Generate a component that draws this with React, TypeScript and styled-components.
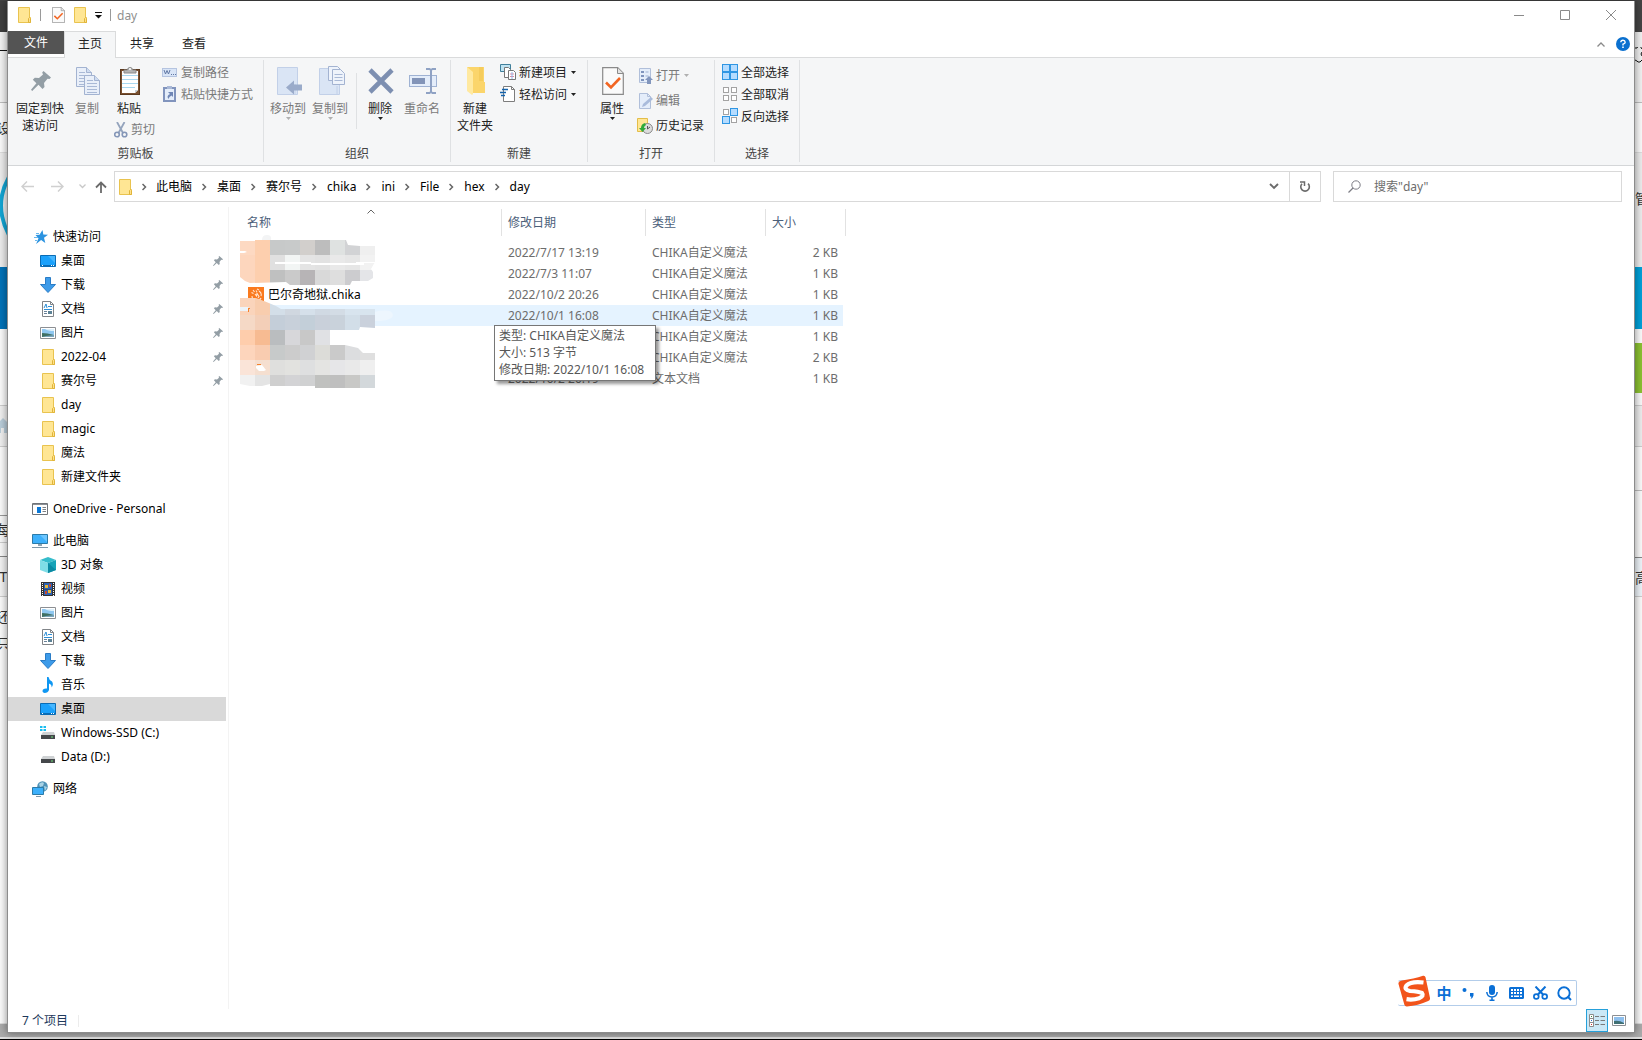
import React from "react";
import styled, { createGlobalStyle } from "styled-components";

const GlobalStyle = createGlobalStyle`
  *, *::before, *::after { box-sizing: border-box; }
  body {
    margin: 0;
    background: #f4f4f4;
    color: #000;
    font: 12px/17px "Noto Sans", "Noto Sans CJK SC", sans-serif;
  }
  button, input { font: inherit; color: inherit; }
  button { border: 0; padding: 0; background: none; white-space: nowrap; }
  a { color: inherit; text-decoration: none; }
  ul, ol { margin: 0; padding: 0; list-style: none; }
  svg { display: block; flex: none; }
`;

/* ---------- desktop behind the window ---------- */

const Desktop = styled.div`
  display: grid;
  grid-template-columns: 7px minmax(0, 1fr) 7px;
  grid-template-rows: minmax(0, 1fr) 7px;
  min-height: 100vh;
  padding-top: 1px;
  background: #444;
`;

const Edge = styled.div`
  display: flex;
  flex-direction: column;
  overflow: hidden;
  height: calc(100vh - 8px);
`;

const Band = styled.div<{ $h?: number; $bg: string; $line?: string; $side?: "left" | "right" }>`
  display: flex;
  flex: ${(p) => (p.$h ? `0 0 ${p.$h}px` : "1")};
  align-items: center;
  justify-content: ${(p) => (p.$side === "right" ? "flex-start" : "center")};
  overflow: hidden;
  background: ${(p) => p.$bg};
  border-bottom: 1px solid ${(p) => p.$line ?? p.$bg};
  color: #333;
  font-size: 14px;
`;

const BottomEdge = styled.div`
  grid-column: 1 / -1;
  background: #ababab;
  border-bottom: 1px solid #000;
  box-shadow: inset 0 -2px #dedede;
`;

/* ---------- window ---------- */

const Window = styled.main`
  position: relative;
  display: flex;
  flex-direction: column;
  min-width: 0;
  background: #fff;
  border: solid #8c8c8c;
  border-width: 0 1px 1px;
  box-shadow: 0 0 8px rgba(0, 0, 0, 0.45);
`;

const TitleBar = styled.header`
  display: flex;
  align-items: center;
  height: 30px;
  padding: 0 0 2px 5px;
  color: #8f8f8f;
`;

const QuickButton = styled.button`
  display: grid;
  place-items: center;
  width: 22px;
  height: 24px;
`;

const Bar = styled.span`
  width: 1px;
  height: 12px;
  margin: 0 6px 0 5px;
  background: #9a9a9a;
`;

const MenuArrow = styled.button`
  display: grid;
  place-items: center;
  width: 14px;
  height: 24px;
`;

const Title = styled.h1`
  margin: 0;
  font: inherit;
`;

const WindowControls = styled.div`
  display: flex;
  margin-left: auto;
`;

const ControlButton = styled.button`
  display: grid;
  place-items: center;
  width: 46px;
  height: 28px;
`;

const Tabs = styled.nav`
  display: flex;
  height: 27px;
  border-bottom: 1px solid #dadbdc;
`;

const Tab = styled.button<{ $kind?: "file" | "active" }>`
  width: 52px;
  height: ${(p) => (p.$kind === "file" ? "23px" : "27px")};
  padding-bottom: ${(p) => (p.$kind === "file" ? "0" : "3px")};
  border: ${(p) => (p.$kind === "active" ? "1px solid #dadbdc" : "0")};
  border-bottom: 0;
  color: ${(p) => (p.$kind === "file" ? "#fff" : "#222")};
  background: ${(p) =>
    p.$kind === "file" ? "#545454" : p.$kind === "active" ? "#f5f6f7" : "transparent"};
  &:first-child { width: 56px; }
`;

const TabTools = styled.div`
  display: flex;
  align-items: center;
  gap: 11px;
  margin-left: auto;
  padding-right: 4px;
`;

/* ---------- ribbon ---------- */

const Ribbon = styled.section`
  display: flex;
  height: 108px;
  padding: 2px 0 3px;
  background: #f5f6f7;
  border-bottom: 1px solid #d4d6d8;
`;

const Group = styled.section`
  display: flex;
  flex-direction: column;
  border-right: 1px solid #dfe1e3;
`;

const GroupBody = styled.div<{ $left?: number; $right?: number }>`
  display: flex;
  flex: 1;
  padding: 0 ${(p) => p.$right ?? 0}px 0 ${(p) => p.$left ?? 3}px;
`;

const GroupLabel = styled.h2`
  margin: 0;
  height: 17px;
  font: inherit;
  color: #444;
  text-align: center;
`;

const BigButton = styled.button<{ $wide?: boolean }>`
  display: flex;
  flex-direction: column;
  align-items: center;
  align-self: flex-start;
  width: ${(p) => (p.$wide ? 52 : 42)}px;
  padding-top: 5px;
  color: #222;
  line-height: 17px;
  &:disabled { color: #7a7a7a; }
`;

const BigIcon = styled.span`
  display: grid;
  place-items: center;
  height: 32px;
  margin-bottom: 3px;
  padding-left: 2px;
`;

const Stack = styled.div`
  display: flex;
  flex-direction: column;
  width: 50px;
`;

const SmallColumn = styled.div<{ $row?: number }>`
  display: flex;
  flex-direction: column;
  padding: ${(p) => (p.$row ? 3 : 1)}px 10px 0 4px;
  & > button { height: ${(p) => p.$row ?? 22}px; }
`;

const SmallButton = styled.button`
  display: flex;
  align-items: center;
  gap: 3px;
  color: #222;
  &:disabled { color: #7a7a7a; }
`;

const CutButton = styled(SmallButton)`
  margin-top: 4px;
  padding-left: 6px;
`;

const Divider = styled.span`
  width: 1px;
  height: 56px;
  margin: 13px 2px 0 5px;
  background: #dfe1e3;
`;

/* ---------- address row ---------- */

const AddressRow = styled.div`
  display: flex;
  height: 36px;
  padding: 5px 12px 0 8px;
`;

const NavButton = styled.button<{ $w: number }>`
  display: grid;
  place-items: center;
  width: ${(p) => p.$w}px;
`;

const AddressBox = styled.div`
  display: flex;
  flex: 1;
  border: 1px solid #d9d9d9;
`;

const Crumbs = styled.ol`
  display: flex;
  flex: 1;
  align-items: center;
  padding-left: 2px;
  li { display: flex; align-items: center; }
`;

const CrumbArrow = styled.span<{ $first: boolean }>`
  display: grid;
  place-items: center;
  width: ${(p) => (p.$first ? 23 : 25)}px;
`;

const BoxButton = styled.button<{ $line?: boolean }>`
  display: grid;
  place-items: center;
  width: ${(p) => (p.$line ? 31 : 30)}px;
  border-left: ${(p) => (p.$line ? "1px solid #d9d9d9" : "0")};
`;

const SearchBox = styled.label`
  display: flex;
  align-items: center;
  gap: 13px;
  width: 289px;
  margin-left: 12px;
  padding-left: 14px;
  border: 1px solid #d9d9d9;
  input {
    flex: 1;
    min-width: 0;
    padding: 0;
    border: 0;
    outline: 0;
    background: none;
  }
  input::placeholder { color: #6d6d6d; opacity: 1; }
`;

/* ---------- body ---------- */

const Body = styled.div`
  display: flex;
  flex: 1;
  min-height: 0;
`;

const Sidebar = styled.nav`
  width: 221px;
  margin-top: 5px;
  padding: 18px 2px 0 0;
  border-right: 1px solid #f3f3f3;
`;

const TreeGroup = styled.ul`
  margin-bottom: 8px;
`;

const TreeLink = styled.a<{ $nested?: boolean; $selected?: boolean }>`
  display: flex;
  align-items: center;
  gap: 5px;
  height: 24px;
  padding: 0 3px 1px ${(p) => (p.$nested ? 32 : 24)}px;
  background: ${(p) => (p.$selected ? "#d9d9d9" : "transparent")};
`;

const PinMark = styled.span`
  margin-left: auto;
`;

const Pane = styled.section`
  position: relative;
  flex: 1;
  min-width: 0;
  padding: 5px 0 0 8px;
`;

const Files = styled.table`
  width: 609px;
  table-layout: fixed;
  border-collapse: separate;
  border-spacing: 0;
  color: #6d6d6d;
  th { padding: 2px 0 6px; font-weight: 400; }
  td { height: 21px; padding: 0 0 0 6px; white-space: nowrap; }
  td:first-child {
    padding-left: 3px;
    border-left: 8px solid transparent;
    background-clip: padding-box;
  }
  td:last-child {
    padding-right: 5px;
    border-right: 3px solid transparent;
    background-clip: padding-box;
    text-align: right;
  }
`;

const Row = styled.tr<{ $hover: boolean }>`
  td { background-color: ${(p) => (p.$hover ? "#e5f3ff" : "transparent")}; }
`;

const HeadButton = styled.button<{ $first?: boolean }>`
  display: block;
  position: relative;
  width: 100%;
  height: 27px;
  padding-left: ${(p) => (p.$first ? 10 : 6)}px;
  border-right: 1px solid #e2e2e2;
  color: #4c607a;
  text-align: left;
`;

const SortMark = styled.span`
  position: absolute;
  top: 0;
  right: 50%;
  margin-right: -6px;
`;

const FileName = styled.span`
  display: flex;
  align-items: center;
  gap: 4px;
  color: #000;
`;

const Smudge = styled.svg`
  position: absolute;
  top: 30px;
  left: 3px;
  pointer-events: none;
`;

const Tooltip = styled.div`
  position: absolute;
  top: 123px;
  left: 265px;
  min-width: 162px;
  padding: 1px 5px 2px 4px;
  border: 1px solid #767676;
  background: #fff;
  box-shadow: 3px 3px 3px rgba(0, 0, 0, 0.4);
  color: #575757;
  white-space: nowrap;
`;

const StatusBar = styled.footer`
  display: flex;
  align-items: center;
  height: 23px;
  padding: 0 4px 0 14px;
  color: #1e395b;
`;

const StatusLine = styled.span`
  width: 1px;
  height: 12px;
  margin-left: 10px;
  background: #ececec;
`;

const ViewSwitch = styled.div`
  display: flex;
  margin-left: auto;
`;

const ViewButton = styled.button<{ $on?: boolean }>`
  display: grid;
  place-items: center;
  width: 22px;
  height: 23px;
  border: 1px solid ${(p) => (p.$on ? "#26a0da" : "transparent")};
  background: ${(p) => (p.$on ? "#cbe8f6" : "transparent")};
`;

/* ---------- input-method bar, floats above everything ---------- */

const ImeBar = styled.aside`
  position: absolute;
  right: 57px;
  bottom: 26px;
  display: flex;
  align-items: center;
  height: 26px;
  padding-left: 34px;
  border: 1px solid #b3cdea;
  border-left: 0;
  border-radius: 2px;
  background: #fff;
`;

const ImeLogo = styled.span`
  position: absolute;
  left: 0;
  bottom: -2px;
`;

const ImeButton = styled.button`
  display: grid;
  place-items: center;
  width: 24px;
  height: 24px;
  color: #0a6fd6;
  font-size: 15px;
  font-weight: 700;
`;

/* ---------- drawings ---------- */

const Folder = () => (
  <svg width="16" height="16" viewBox="0 0 16 16">
    <path d="M2.500.500h11v10h1v5h-12z" fill="#ffe694" stroke="#e9c34f" />
    <path d="M12.500 15.500v-4l1-1 1 1v4z" fill="#ffe08a" stroke="#e0b53a" />
  </svg>
);

const CheckPage = ({ w, h }: { w: number; h: number }) => (
  <svg width={w} height={h} viewBox="0 0 22 28" preserveAspectRatio="none">
    <path d="M.7.7h15l5.600 5.600v21H.7z" fill="#fafafa" stroke="#8a8a8a" strokeWidth="1.200" />
    <path d="M15.500.7v5.800h5.800" fill="#e3e3e3" stroke="#8a8a8a" />
    <path d="M4 15.500l5 5L18 11" fill="none" stroke="#f26522" strokeWidth="2.600" />
  </svg>
);

const Pin = ({ size }: { size: number }) => (
  <svg width={size} height={size} viewBox="0 0 20 20">
    <path
      d="M12.500 0l7.500 6.500-1.500 1.500-2-.3-3.500 4.300.5 4-2 2-4-4.200L1.200 20 0 18.800l5.400-6.500L1.800 8.700l2-2 4.200.4 4-3.700-.8-2z"
      fill="#939ea5"
    />
  </svg>
);

const Sheet = ({ x, y }: { x: number; y: number }) => (
  <g transform={`translate(${x} ${y})`}>
    <path d="M.5.5h10l5 5v14H.5z" fill="#e9eff9" stroke="#a3b3d1" />
    <path d="M10.500.5v5h5" fill="#cfdcf0" stroke="#a3b3d1" />
    <path d="M3 5.500h6M3 8.500h10M3 11.500h10M3 14.500h10M3 17.500h10" stroke="#a9b9d6" />
  </g>
);

const CopyIcon = () => (
  <svg width="25" height="28" viewBox="0 0 25 28">
    <Sheet x={0} y={0} />
    <Sheet x={8} y={8} />
  </svg>
);

const PasteIcon = () => (
  <svg width="22" height="30" viewBox="0 0 22 30">
    <rect x="1.500" y="3.500" width="19" height="25" fill="#7a5030" stroke="#5c3a20" />
    <path d="M3 5h16v19l-3 3H3z" fill="#fff" />
    <path d="M16 27v-3h3z" fill="#c9d3d9" />
    <path d="M3 9.500h16M3 13.500h16M3 17.500h16M3 21.500h13" stroke="#a9d8f0" />
    <path d="M5 7V4h3.500a2.500 2.500 0 015 0H17v3z" fill="#b5b5b5" stroke="#8a8a8a" />
    <circle cx="11" cy="3" r="1" fill="#fff" />
  </svg>
);

const ScissorsIcon = () => (
  <svg width="14" height="16" viewBox="0 0 14 16">
    <path d="M3 0l6 11M10.500 0l-6 11" stroke="#94a4bd" strokeWidth="1.800" />
    <circle cx="3" cy="12.500" r="2.300" fill="none" stroke="#8496b8" strokeWidth="1.600" />
    <circle cx="10.500" cy="12.500" r="2.300" fill="none" stroke="#8496b8" strokeWidth="1.600" />
  </svg>
);

const CopyPathIcon = () => (
  <svg width="16" height="16" viewBox="0 0 16 16">
    <rect x=".5" y="4.500" width="14" height="8" fill="#d9e5f7" stroke="#b5c4e0" />
    <path d="M2 6l1.500 4L5 6.500 6.500 10 8 6" fill="none" stroke="#6279a5" />
    <path d="M9 10.500h1M11 10.500h1M13 10.500h1" stroke="#6279a5" />
  </svg>
);

const PasteLinkIcon = () => (
  <svg width="16" height="16" viewBox="0 0 16 16">
    <path d="M2 2h11v13H2z" fill="#e4edfa" stroke="#8194bd" strokeWidth="2" />
    <path d="M5 0h5v3H5z" fill="#a9b8d6" />
    <path d="M6 6h5v5L9.500 9.500Q7 10.500 6.500 13 4 10 8 8z" fill="#6f86b5" />
  </svg>
);

const MoveIcon = () => (
  <svg width="26" height="30" viewBox="0 0 26 30">
    <path d="M1.500 1.500h20v27h-20z" fill="#dae5f5" stroke="#c2d0e8" />
    <path d="M19 18v10" stroke="#c2d0e8" />
    <path d="M10 21.500l8-7v4h8v6h-8v4z" fill="#9aabca" />
  </svg>
);

const CopyToIcon = () => (
  <svg width="28" height="30" viewBox="0 0 28 30">
    <path d="M2.500 2.500h20v26h-20z" fill="#dae5f5" stroke="#c2d0e8" />
    <path d="M20 20v8" stroke="#c2d0e8" />
    <path d="M11.500.5h9l3 3v11h-12z" fill="#eef3fb" stroke="#a3b3d1" />
    <path d="M15.500 3.500h8l4 4v11h-12z" fill="#eef3fb" stroke="#a3b3d1" />
    <path d="M17.500 8.500h8M17.500 11.500h8M17.500 14.500h8" stroke="#a9b9d6" />
  </svg>
);

const DeleteIcon = () => (
  <svg width="26" height="26" viewBox="0 0 26 26">
    <path d="M2 2l22 22M24 2L2 24" stroke="#7d8fb1" strokeWidth="4.600" />
  </svg>
);

const RenameIcon = () => (
  <svg width="28" height="28" viewBox="0 0 28 28">
    <rect x=".5" y="8.500" width="27" height="11" fill="#e4edfa" stroke="#9fb2d3" />
    <rect x="3" y="11" width="13" height="6" fill="#8294b8" />
    <path d="M17 2h3.500l1.500 1 1.500-1H27M22 3v22M17 26h3.500l1.500-1 1.500 1H27" fill="none" stroke="#8fa2c4" strokeWidth="2" />
  </svg>
);

const NewFolderIcon = () => (
  <svg width="20" height="30" viewBox="0 0 20 30">
    <path d="M1 1h17v15h1v11H6z" fill="#fbd56b" />
    <path d="M1 1l6 5v22l-1 1-5-4z" fill="#ffe9a0" />
    <path d="M13 1h4v14h-4z" fill="#f5cc5c" />
  </svg>
);

const NewItemIcon = () => (
  <svg width="16" height="16" viewBox="0 0 16 16">
    <path d="M.5.5h10v7H.5z" fill="#bfe3f2" stroke="#3f7f9b" />
    <path d="M4.500 3.500h4l2 2v8h-6z" fill="#fff" stroke="#777" />
    <path d="M8.500 6.500h5l2 2v7h-7z" fill="#fff" stroke="#777" />
    <path d="M10 10h4M10 12.500h4" stroke="#e58aa0" />
    <path d="M12 8v7" stroke="#8fb5e8" />
  </svg>
);

const EasyAccessIcon = () => (
  <svg width="16" height="16" viewBox="0 0 16 16">
    <path d="M3.500.5h8l3 3v12h-11z" fill="#fff" stroke="#7d7d7d" />
    <path d="M11.500.5v3h3" fill="none" stroke="#7d7d7d" />
    <path d="M2 3.500h6M0 6.500h6M1 9.500h4" stroke="#1464ad" strokeWidth="1.400" />
  </svg>
);

const OpenIcon = () => (
  <svg width="16" height="16" viewBox="0 0 16 16">
    <path d="M2.500.5h11v14h-11z" fill="#e4edfa" stroke="#b0bfda" />
    <path d="M4 3h3v2H4zM4 7h3v2H4zM4 11h3v2H4z" fill="#7f94bd" />
    <path d="M8.500 4h3M8.500 8h3" stroke="#9fb2d3" />
    <path d="M12 8l4 4h-2v4h-4v-4H8z" fill="#8296bd" />
  </svg>
);

const EditIcon = () => (
  <svg width="16" height="16" viewBox="0 0 16 16">
    <path d="M2.500.5h8l3 3v12h-11z" fill="#e4edfa" stroke="#b0bfda" />
    <path d="M10.500.5v3h3" fill="none" stroke="#b0bfda" />
    <path d="M5 14l1-3 8-7 2 2-8 7z" fill="#a9bbdb" />
  </svg>
);

const HistoryIcon = () => (
  <svg width="16" height="16" viewBox="0 0 16 16">
    <path d="M.5.5h10v13H.5z" fill="#ffe694" stroke="#e3bd48" />
    <circle cx="10.500" cy="10.500" r="5" fill="#dcdcdc" stroke="#8a8a8a" />
    <path d="M10.500 8v3l2.500-2" fill="none" stroke="#555" />
    <path d="M8 5q-4 1-4 5H2l3.500 4L9 10H7q0-2 2-3z" fill="#2faa3a" />
  </svg>
);

const Squares = ({ on }: { on: boolean[] }) => (
  <svg width="16" height="16" viewBox="0 0 16 16">
    {on.map((active, i) => {
      const x = (i % 2) * 8;
      const y = i < 2 ? 0 : 8;
      return active ? (
        <rect key={i} x={x + 0.5} y={y + 0.5} width="7" height="7" fill="#b5dcff" stroke="#2f96e3" />
      ) : (
        <rect key={i} x={x + 1.5} y={y + 1.5} width="5" height="5" fill="#fff" stroke="#a3a3a3" />
      );
    })}
  </svg>
);

const Caret = ({ color = "#222" }: { color?: string }) => (
  <svg width="7" height="3" viewBox="0 0 7 3">
    <path d="M1 0h5L3.500 3z" fill={color} />
  </svg>
);

const StarIcon = () => (
  <svg width="16" height="16" viewBox="0 0 16 16">
    <path d="M10.500 1l.8 4.500 4.700.3-4 2.900 1.300 5.300-4.200-2.900-5 3.900L6.500 9.300 3.500 6l4-.3z" fill="#2b93e0" />
    <path d="M4 4.500h3M2 8.500h4M3 11.500h2" stroke="#67b7ee" />
  </svg>
);

const DesktopIcon = () => (
  <svg width="16" height="16" viewBox="0 0 16 16">
    <path d="M.5 2.500h15v11H.5z" fill="#1ba1fb" stroke="#0a6cb5" />
    <path d="M8 3h7v7z" fill="#45b6ff" />
    <path d="M1 12.500h14" stroke="#0a6cb5" />
    <path d="M2 12.500h1M11 12.500h1M13 12.500h1" stroke="#fff" />
  </svg>
);

const DownloadIcon = () => (
  <svg width="16" height="16" viewBox="0 0 16 16">
    <path d="M5.500.5h5v7h5L8 15.500.5 7.500h5z" fill="#3d9be9" stroke="#2a7cc6" />
  </svg>
);

const DocumentIcon = () => (
  <svg width="16" height="16" viewBox="0 0 16 16">
    <path d="M2.500.5h8l3 3v12h-11z" fill="#fff" stroke="#808488" />
    <path d="M10.500.5v3h3" fill="none" stroke="#808488" />
    <path d="M4 7l2-4 1 4M8 5.500h4M4 8.500h8" fill="none" stroke="#2c8ed6" />
    <path d="M4 10.500h3M4 12.500h3" stroke="#6b8299" />
    <path d="M8 10h4v3H8z" fill="#5c8296" />
  </svg>
);

const PictureIcon = () => (
  <svg width="16" height="16" viewBox="0 0 16 16">
    <path d="M.5 2.500h15v11H.5z" fill="#fff" stroke="#8c8f93" />
    <path d="M2 4h12v8H2z" fill="#8fc7f0" />
    <path d="M5 4q3 2 9 2V4z" fill="#dceffa" />
    <path d="M2 8q5 0 12 2v2H2z" fill="#3f6f63" />
    <path d="M6 11l8-1v2H2z" fill="#7ba6bd" />
  </svg>
);

const OneDriveIcon = () => (
  <svg width="16" height="16" viewBox="0 0 16 16">
    <path d="M.5 2.500h15v11H.5z" fill="#fff" stroke="#6f7378" />
    <path d="M1 3.500h14" stroke="#8b8f94" />
    <path d="M5 6h4v6H5z" fill="#0b78d7" />
    <path d="M10.500 6.500H14M10.500 8.500H14M10.500 10.500H14" stroke="#7c8084" />
  </svg>
);

const ComputerIcon = () => (
  <svg width="16" height="16" viewBox="0 0 16 16">
    <path d="M.5 1.500h15v9H.5z" fill="#3db0fb" stroke="#2c7ba8" />
    <path d="M8 2h7v7z" fill="#6cc6ff" />
    <path d="M6 12h4" stroke="#8fa3b0" strokeWidth="2" />
    <path d="M0 14.500h16" stroke="#7f98a8" />
  </svg>
);

const CubeIcon = () => (
  <svg width="16" height="16" viewBox="0 0 16 16">
    <path d="M8 0l8 3-8 3-8-3z" fill="#35bccb" />
    <path d="M0 3l8 3v10l-8-3z" fill="#7fdde6" />
    <path d="M16 3L8 6v10l8-3z" fill="#17a3b8" />
    <path d="M8 6l8 7-8 3z" fill="#0b8aa3" />
  </svg>
);

const VideoIcon = () => (
  <svg width="16" height="16" viewBox="0 0 16 16">
    <path d="M1 1h14v14H1z" fill="#333" />
    <path d="M4 2h8v6H4zM4 8.500h8V14H4z" fill="#2c62b5" />
    <path d="M5 4h3v3H5zM8 9h3v3H8z" fill="#e8b93a" />
    <path d="M9 3h2v3H9zM5 10h2v3H5z" fill="#c64b32" />
    <path d="M2.500 2v13M13.500 2v13" stroke="#fff" strokeDasharray="1 1" />
  </svg>
);

const MusicIcon = () => (
  <svg width="16" height="16" viewBox="0 0 16 16">
    <path d="M7 0h1.500q.5 3 3.500 4.500 2 3-.5 6 .5-3-2.500-4V13q-1 3-4.500 3Q1.500 15 3 12.500 5 11 7 11.500z" fill="#0f97f2" />
  </svg>
);

const DriveIcon = ({ system }: { system?: boolean }) => (
  <svg width="16" height="16" viewBox="0 0 16 16">
    {system && <path d="M0 1h2.500v2H0zM3.500 1H6v2H3.500zM0 4h2.500v2H0zM3.500 4H6v2H3.500z" fill="#19bdf0" />}
    <path d="M3 7h11l1 3H1z" fill="#cfd2d4" />
    <path d="M1 10h14v4H1z" fill="#45484b" />
    <path d="M11 12h2" stroke="#6fe07a" />
  </svg>
);

const NetworkIcon = () => (
  <svg width="16" height="16" viewBox="0 0 16 16">
    <circle cx="10.500" cy="5.500" r="5.300" fill="#4f93b8" />
    <path d="M7 3q3-3 5-1l-1 3-3 1zM12 5l3 1-2 4z" fill="#a9d3e6" />
    <path d="M.5 6.500h11v7H.5z" fill="#3db0fb" stroke="#2c7ba8" />
    <path d="M4 15.500h5" stroke="#7f98a8" />
  </svg>
);

const ChikaIcon = () => (
  <svg width="16" height="16" viewBox="0 0 16 16">
    <path d="M0 0h16v16H0z" fill="#fa7a1e" />
    <path
      d="M3.500 5.500l2 1M5 3l1.500 2M8 3.500l1 1.500M11 4q3 2 2 5M13 11q-1 2.500-4 2.500M4 9q0 4 4 3.500M7 7l1.500 2 .5-2.500 2 3-1 1.500M3 12l2 1M9 2l2 1"
      fill="none"
      stroke="#ffe6d2"
      strokeWidth="1.100"
    />
  </svg>
);

const Line = ({ d, w, h, color, stroke = 1 }: { d: string; w: number; h: number; color: string; stroke?: number }) => (
  <svg width={w} height={h} viewBox={`0 0 ${w} ${h}`}>
    <path d={d} fill="none" stroke={color} strokeWidth={stroke} />
  </svg>
);

const HelpIcon = () => (
  <svg width="14" height="14" viewBox="0 0 14 14">
    <circle cx="7" cy="7" r="7" fill="#0a70cf" />
    <path d="M4.800 5.300Q5 3.300 7 3.300t2.200 1.900Q9.200 6.300 7 7.200v1.300" fill="none" stroke="#fff" strokeWidth="1.400" />
    <path d="M6.200 9.600h1.600v1.500H6.200z" fill="#fff" />
  </svg>
);

const mosaic: { y: number; h: number; cells: string[] }[] = [
  { y: 240, h: 15, cells: ["#fdd9c2", "#fdcfae", "#c7c9c9", "#c8caca", "#d2cfcc", "#bdbdbd", "#dfe2e1", "#d2d3d5", "#efefef"] },
  { y: 255, h: 15, cells: ["#fdd6bd", "#fdcfae", "#e0e0e0", "#f2f5f4", "#e4e4e4", "#e2e2e2", "#e9e9e9", "#e6e6e6", "#f2f2f2"] },
  { y: 270, h: 16, cells: ["#fdd6bd", "#fdcfae", "#bfc0c0", "#cacaca", "#b7b4b6", "#d9d9d9", "#dedede", "#cccccf", "#e4e5e8"] },
  { y: 298, h: 17, cells: ["#fad4bb", "#f8cdae", "#d3dee8", "#d0d7e0", "#d5e0ea", "#d0d9e3", "#d3dce5", "#d8e4ee", "#d8e4ee"] },
  { y: 315, h: 15, cells: ["#f5d9c6", "#f3cfb8", "#c4ced9", "#c8d0da", "#c3cfd9", "#c9d0da", "#c9d2db", "#d2dee8", "#cad1dc"] },
  { y: 330, h: 15, cells: ["#fecdac", "#f7bb92", "#babdbf", "#d7d7da", "#c8c8c8", "#e0e1e4"] },
  { y: 345, h: 15, cells: ["#fdd5bc", "#f9ccb0", "#c7caca", "#cccccc", "#d0d1d3", "#dcdcd8", "#cacaca", "#dcdddf", "#dfdfdf"] },
  { y: 360, h: 15, cells: ["#fae4d8", "#f5dfd0", "#dfdfdd", "#e2e2df", "#dedfe0", "#e4e4e2", "#e6e6e8", "#e9e9e9", "#efefef"] },
  { y: 375, h: 13, cells: ["#f1f1f1", "#e4e4e4", "#cfcfcf", "#d3d3d5", "#d0d1d2", "#c0c1bf", "#bfbfbf", "#c8c8c6", "#d3d8db"] },
];

const HiddenNames = () => (
  <Smudge width="166" height="160" viewBox="232 232 166 160" aria-hidden="true">
    <clipPath id="strokes">
      <path d="M240 241H255V240H346L348 245 360 246H375V262L371 269 373 272V278L368 281H352L350 285H290L286 282 250 283 245 281 240 277Z" />
      <path d="M240 298H256L264 301 276 306 281 309H375V328L360 327 359 330H330V345H345L358 348 363 353H375V388H315V386H270V384L262 386H250L240 384Z" />
    </clipPath>
    <path d="M262 240q0-5 5-5t4 5z" fill="#f3f4f5" />
    <path d="M374 312q18-4 19 3-1 6-18 6z" fill="#edf6fe" />
    <g clipPath="url(#strokes)" shapeRendering="crispEdges">
      {mosaic.map((row) =>
        row.cells.map((fill, i) => (
          <rect key={`${row.y}-${i}`} x={240 + i * 15} y={row.y} width="15" height={row.h} fill={fill} />
        )),
      )}
    </g>
    <path d="M275 262h36v1h45v-1h19v1h-11v2H311v-1h-36zM240 251h5l2 1-3 1h-4z" fill="#fff" />
    <path d="M240 307h8l1 1v3h-9z" fill="#edf3f8" />
    <path d="M248 308h2v1h-1v3h-1z" fill="#f5822d" />
    <path d="M257 364h4v1h-4z" fill="#f5822d" />
    <path d="M256 366l6-1 4 5-2 1h-5l-3-3z" fill="#fff" />
  </Smudge>
);

/* ---------- data ---------- */

type Node = { label: string; icon: React.ReactNode; pinned?: boolean; selected?: boolean };

const tree: Node[][] = [
  [
    { label: "快速访问", icon: <StarIcon /> },
    { label: "桌面", icon: <DesktopIcon />, pinned: true },
    { label: "下载", icon: <DownloadIcon />, pinned: true },
    { label: "文档", icon: <DocumentIcon />, pinned: true },
    { label: "图片", icon: <PictureIcon />, pinned: true },
    { label: "2022-04", icon: <Folder />, pinned: true },
    { label: "赛尔号", icon: <Folder />, pinned: true },
    { label: "day", icon: <Folder /> },
    { label: "magic", icon: <Folder /> },
    { label: "魔法", icon: <Folder /> },
    { label: "新建文件夹", icon: <Folder /> },
  ],
  [{ label: "OneDrive - Personal", icon: <OneDriveIcon /> }],
  [
    { label: "此电脑", icon: <ComputerIcon /> },
    { label: "3D 对象", icon: <CubeIcon /> },
    { label: "视频", icon: <VideoIcon /> },
    { label: "图片", icon: <PictureIcon /> },
    { label: "文档", icon: <DocumentIcon /> },
    { label: "下载", icon: <DownloadIcon /> },
    { label: "音乐", icon: <MusicIcon /> },
    { label: "桌面", icon: <DesktopIcon />, selected: true },
    { label: "Windows-SSD (C:)", icon: <DriveIcon system /> },
    { label: "Data (D:)", icon: <DriveIcon /> },
  ],
  [{ label: "网络", icon: <NetworkIcon /> }],
];

const path = ["此电脑", "桌面", "赛尔号", "chika", "ini", "File", "hex", "day"];

const magic = "CHIKA自定义魔法";
const files = [
  { name: "", date: "2022/7/17 13:19", type: magic, size: "2 KB" },
  { name: "", date: "2022/7/3 11:07", type: magic, size: "1 KB" },
  { name: "巴尔奇地狱.chika", date: "2022/10/2 20:26", type: magic, size: "1 KB" },
  { name: "", date: "2022/10/1 16:08", type: magic, size: "1 KB", hover: true },
  { name: "", date: "2022/10/1 16:08", type: magic, size: "1 KB" },
  { name: "", date: "2022/10/1 16:08", type: magic, size: "2 KB" },
  { name: "", date: "2022/10/2 20:19", type: "文本文档", size: "1 KB" },
];

const Big = ({ icon, lines, caret, wide, disabled }: {
  icon: React.ReactNode; lines: string[]; caret?: boolean; wide?: boolean; disabled?: boolean;
}) => (
  <BigButton $wide={wide} disabled={disabled}>
    <BigIcon>{icon}</BigIcon>
    {lines.map((line) => <span key={line}>{line}</span>)}
    {caret && <Caret color={disabled ? "#b0b0b0" : "#222"} />}
  </BigButton>
);

const Small = ({ icon, label, caret, disabled }: {
  icon: React.ReactNode; label: string; caret?: boolean; disabled?: boolean;
}) => (
  <SmallButton disabled={disabled}>
    {icon}
    <span>{label}</span>
    {caret && <Caret color={disabled ? "#b0b0b0" : "#222"} />}
  </SmallButton>
);

export default function App() {
  return (
    <Desktop>
      <GlobalStyle />
      <Edge aria-hidden="true">
        <Band $h={31} $bg="#3f3f3f" />
        <Band $h={19} $bg="#f3f3f3" $line="#111" />
        <Band $h={52} $bg="#f3f3f3" $line="#bdbdbd" />
        <Band $h={50} $bg="#fafafa" $line="#ddd">设</Band>
        <Band $h={114} $bg="#ececec">
          <svg width="7" height="114" viewBox="0 0 7 114">
            <path d="M9 24Q-7 52 9 82" fill="none" stroke="#12a5d4" strokeWidth="4" />
          </svg>
        </Band>
        <Band $h={62} $bg="#0072b8" />
        <Band $h={77} $bg="#fafafa" $line="#ccc" />
        <Band $h={41} $bg="#efefef" $line="#ccc">
          <svg width="7" height="16" viewBox="0 0 7 16">
            <path d="M0 3l3-3 4 4v11H4v-5H1v5H0z" fill="#b9ccd9" />
          </svg>
        </Band>
        <Band $h={69} $bg="#fafafa" $line="#999" />
        <Band $h={27} $bg="#f8f8f8" $line="#ccc">每</Band>
        <Band $h={14} $bg="#f8f8f8" $line="#888" />
        <Band $h={40} $bg="#f2f2f2" $line="#ccc">T</Band>
        <Band $h={40} $bg="#fafafa">还</Band>
        <Band $h={14} $bg="#fafafa">只</Band>
        <Band $bg="#fafafa" $line="#ddd" />
        <Band $h={9} $bg="#ababab" />
      </Edge>
      <Window>
        <TitleBar>
          <QuickButton aria-label="day"><Folder /></QuickButton>
          <Bar />
          <QuickButton aria-label="属性"><CheckPage w={13} h={16} /></QuickButton>
          <QuickButton aria-label="新建文件夹"><Folder /></QuickButton>
          <MenuArrow aria-label="自定义快速访问工具栏">
            <svg width="7" height="7" viewBox="0 0 7 7"><path d="M0 0h7v1H0zM0 3h7L3.500 6.500z" fill="#111" /></svg>
          </MenuArrow>
          <Bar />
          <Title>day</Title>
          <WindowControls>
            <ControlButton aria-label="最小化"><Line w={10} h={10} d="M0 5.500h10" color="#8a8a8a" /></ControlButton>
            <ControlButton aria-label="最大化"><Line w={10} h={10} d="M.5.5h9v9h-9z" color="#8a8a8a" /></ControlButton>
            <ControlButton aria-label="关闭"><Line w={10} h={10} d="M0 0l10 10M10 0L0 10" color="#8a8a8a" /></ControlButton>
          </WindowControls>
        </TitleBar>

        <Tabs>
          <Tab $kind="file">文件</Tab>
          <Tab $kind="active">主页</Tab>
          <Tab>共享</Tab>
          <Tab>查看</Tab>
          <TabTools>
            <button aria-label="折叠功能区"><Line w={8} h={5} d="M.5 4.500L4 1l3.500 3.500" color="#8a8a8a" stroke={1.3} /></button>
            <button aria-label="帮助"><HelpIcon /></button>
          </TabTools>
        </Tabs>

        <Ribbon>
          <Group>
            <GroupBody $left={6}>
              <Big wide icon={<Pin size={20} />} lines={["固定到快", "速访问"]} />
              <Big disabled icon={<CopyIcon />} lines={["复制"]} />
              <Stack>
                <Big icon={<PasteIcon />} lines={["粘贴"]} />
                <CutButton disabled><ScissorsIcon /><span>剪切</span></CutButton>
              </Stack>
              <SmallColumn>
                <Small disabled icon={<CopyPathIcon />} label="复制路径" />
                <Small disabled icon={<PasteLinkIcon />} label="粘贴快捷方式" />
              </SmallColumn>
            </GroupBody>
            <GroupLabel>剪贴板</GroupLabel>
          </Group>
          <Group>
            <GroupBody $right={7}>
              <Big disabled caret icon={<MoveIcon />} lines={["移动到"]} />
              <Big disabled caret icon={<CopyToIcon />} lines={["复制到"]} />
              <Divider />
              <Big caret icon={<DeleteIcon />} lines={["删除"]} />
              <Big disabled icon={<RenameIcon />} lines={["重命名"]} />
            </GroupBody>
            <GroupLabel>组织</GroupLabel>
          </Group>
          <Group>
            <GroupBody>
              <Big icon={<NewFolderIcon />} lines={["新建", "文件夹"]} />
              <SmallColumn>
                <Small caret icon={<NewItemIcon />} label="新建项目" />
                <Small caret icon={<EasyAccessIcon />} label="轻松访问" />
              </SmallColumn>
            </GroupBody>
            <GroupLabel>新建</GroupLabel>
          </Group>
          <Group>
            <GroupBody>
              <Big caret icon={<CheckPage w={22} h={28} />} lines={["属性"]} />
              <SmallColumn $row={25}>
                <Small disabled caret icon={<OpenIcon />} label="打开" />
                <Small disabled icon={<EditIcon />} label="编辑" />
                <Small icon={<HistoryIcon />} label="历史记录" />
              </SmallColumn>
            </GroupBody>
            <GroupLabel>打开</GroupLabel>
          </Group>
          <Group>
            <GroupBody>
              <SmallColumn>
                <Small icon={<Squares on={[true, true, true, true]} />} label="全部选择" />
                <Small icon={<Squares on={[false, false, false, false]} />} label="全部取消" />
                <Small icon={<Squares on={[false, true, true, false]} />} label="反向选择" />
              </SmallColumn>
            </GroupBody>
            <GroupLabel>选择</GroupLabel>
          </Group>
        </Ribbon>

        <AddressRow>
          <NavButton $w={22} aria-label="后退"><Line w={13} h={11} d="M13 5.500H1M6 .5l-5 5 5 5" color="#d0d0d0" stroke={1.5} /></NavButton>
          <NavButton $w={38} aria-label="前进"><Line w={13} h={11} d="M0 5.500h12M7 .5l5 5-5 5" color="#d0d0d0" stroke={1.5} /></NavButton>
          <NavButton $w={12} aria-label="最近浏览的位置"><Line w={7} h={5} d="M.5.5l3 3 3-3" color="#c8c8c8" stroke={1.3} /></NavButton>
          <NavButton $w={26} aria-label="上移"><Line w={12} h={12} d="M6 12V1.500M1 6.500l5-5 5 5" color="#6b6b6b" stroke={1.8} /></NavButton>
          <AddressBox>
            <Crumbs>
              <li><Folder /></li>
              {path.map((name, i) => (
                <li key={i}>
                  <CrumbArrow $first={i === 0}><Line w={5} h={8} d="M.5 1l3 3-3 3" color="#666" stroke={1.5} /></CrumbArrow>
                  <a href="#">{name}</a>
                </li>
              ))}
            </Crumbs>
            <BoxButton aria-label="历史位置"><Line w={10} h={7} d="M1 1l4 4 4-4" color="#6b6b6b" stroke={1.9} /></BoxButton>
            <BoxButton $line aria-label="刷新">
              <svg width="12" height="12" viewBox="0 0 12 12">
                <path d="M3 2.800a4.300 4.300 0 106-.1" fill="none" stroke="#6b6b6b" strokeWidth="1.600" />
                <path d="M1 1h4.500v4" fill="none" stroke="#6b6b6b" strokeWidth="1.500" />
              </svg>
            </BoxButton>
          </AddressBox>
          <SearchBox>
            <svg width="13" height="13" viewBox="0 0 13 13">
              <circle cx="8" cy="5" r="4.200" fill="none" stroke="#7d7d85" />
              <path d="M5 8L.5 12.500" stroke="#7d7d85" strokeWidth="1.200" />
            </svg>
            <input aria-label="搜索" placeholder={'搜索"day"'} />
          </SearchBox>
        </AddressRow>

        <Body>
          <Sidebar>
            {tree.map((group, g) => (
              <TreeGroup key={g}>
                {group.map((node, i) => (
                  <li key={i}>
                    <TreeLink href="#" $nested={i > 0} $selected={node.selected}>
                      {node.icon}
                      <span>{node.label}</span>
                      {node.pinned && <PinMark><Pin size={10} /></PinMark>}
                    </TreeLink>
                  </li>
                ))}
              </TreeGroup>
            ))}
          </Sidebar>
          <Pane>
            <Files>
              <colgroup>
                <col style={{ width: 265 }} />
                <col style={{ width: 144 }} />
                <col style={{ width: 120 }} />
                <col />
              </colgroup>
              <thead>
                <tr>
                  <th>
                    <HeadButton $first>
                      名称
                      <SortMark><Line w={8} h={5} d="M.5 4.500L4 1l3.500 3.500" color="#666" /></SortMark>
                    </HeadButton>
                  </th>
                  <th><HeadButton>修改日期</HeadButton></th>
                  <th><HeadButton>类型</HeadButton></th>
                  <th><HeadButton>大小</HeadButton></th>
                </tr>
              </thead>
              <tbody>
                {files.map((file, i) => (
                  <Row key={i} $hover={Boolean(file.hover)}>
                    <td>{file.name && <FileName><ChikaIcon />{file.name}</FileName>}</td>
                    <td>{file.date}</td>
                    <td>{file.type}</td>
                    <td>{file.size}</td>
                  </Row>
                ))}
              </tbody>
            </Files>
            <HiddenNames />
            <Tooltip role="tooltip">
              <div>类型: CHIKA自定义魔法</div>
              <div>大小: 513 字节</div>
              <div>修改日期: 2022/10/1 16:08</div>
            </Tooltip>
          </Pane>
        </Body>

        <StatusBar>
          <span>7 个项目</span>
          <StatusLine />
          <ViewSwitch>
            <ViewButton $on aria-label="详细信息">
              <svg width="16" height="13" viewBox="0 0 16 13">
                <path d="M.5.5h4v12h-4zM.5 4.500h4M.5 8.500h4" fill="#fff" stroke="#8c8c8c" />
                <path d="M6 2.500h4M11.500 2.500H16M6 6.500h4M11.500 6.500H16M6 10.500h4M11.500 10.500H16" stroke="#7a7a7a" />
                <path d="M2 2h1v1H2z" fill="#2c8a3c" />
                <path d="M2 6h1v1H2z" fill="#2c6cd0" />
                <path d="M2 10h1v1H2z" fill="#d03030" />
              </svg>
            </ViewButton>
            <ViewButton aria-label="大图标">
              <svg width="14" height="11" viewBox="0 0 14 11">
                <path d="M.5.5h13v10H.5z" fill="#fff" stroke="#8c8f93" />
                <path d="M2 2h10v7H2z" fill="#8fc0ee" />
                <path d="M2 6q5-1 10 2v1H2z" fill="#3f6f73" />
              </svg>
            </ViewButton>
          </ViewSwitch>
        </StatusBar>

        <ImeBar>
          <ImeLogo>
            <svg width="32" height="32" viewBox="0 0 32 32">
              <path d="M4 5.500Q16 4 25 .8q2-.5 2.500 1.500L32 23q.3 2.200-1.800 3Q20 30.500 9 31.500q-2 .2-2.600-1.800L.5 9Q0 6.300 4 5.500z" fill="#f2541b" />
              <path d="M25.500 7.500Q13 6 8.500 10.500q-3 4 3.500 5.500 9 .5 12 2 2.500 3-3 5.200-6 2-12.500 1" fill="none" stroke="#fff" strokeWidth="4.200" />
            </svg>
          </ImeLogo>
          <ImeButton>中</ImeButton>
          <ImeButton aria-label="标点">
            <svg width="12" height="12" viewBox="0 0 12 12">
              <circle cx="2.500" cy="3" r="2" fill="#0a6fd6" />
              <path d="M8 6h3.500v2.500Q11 11 8.500 12q1-1.500.8-2.500H8z" fill="#0a6fd6" />
            </svg>
          </ImeButton>
          <ImeButton aria-label="语音">
            <svg width="12" height="16" viewBox="0 0 12 16">
              <rect x="3" width="6" height="10" rx="3" fill="#0a6fd6" />
              <path d="M.8 7q.4 5 5.200 5t5.200-5M6 12v4M3.500 15.200h5" fill="none" stroke="#0a6fd6" strokeWidth="1.500" />
            </svg>
          </ImeButton>
          <ImeButton aria-label="键盘">
            <svg width="15" height="12" viewBox="0 0 15 12">
              <rect width="15" height="12" rx="1.500" fill="#0a6fd6" />
              <path d="M2 3h11M2 6h11" stroke="#fff" strokeWidth="1.800" strokeDasharray="2 1" />
              <path d="M2 9.200h2M5 9.200h5M11 9.200h2" stroke="#fff" strokeWidth="1.600" />
            </svg>
          </ImeButton>
          <ImeButton aria-label="截图">
            <svg width="15" height="14" viewBox="0 0 15 14">
              <path d="M2.500.5l8 8.500M12.500.5l-8 8.500" stroke="#0a6fd6" strokeWidth="2" />
              <circle cx="3.300" cy="10.500" r="2.400" fill="none" stroke="#0a6fd6" strokeWidth="1.700" />
              <circle cx="11.700" cy="10.500" r="2.400" fill="none" stroke="#0a6fd6" strokeWidth="1.700" />
            </svg>
          </ImeButton>
          <ImeButton aria-label="搜索">
            <svg width="15" height="15" viewBox="0 0 15 15">
              <circle cx="7" cy="7" r="5.700" fill="none" stroke="#0a6fd6" strokeWidth="1.900" />
              <path d="M10.500 10.500l3.500 3.500" stroke="#0a6fd6" strokeWidth="2" />
            </svg>
          </ImeButton>
        </ImeBar>
      </Window>
      <Edge aria-hidden="true">
        <Band $h={31} $bg="#444" />
        <Band $h={71} $bg="#f1f1f1" $line="#bdbdbd">
          <svg width="7" height="40" viewBox="0 0 7 40">
            <path d="M0 1h2l1-2h2l2 3M0 13l2 1 1 1h2l2-2M7 5q-2 2 0 4" fill="none" stroke="#111" />
          </svg>
        </Band>
        <Band $h={50} $bg="#fafafa" $line="#ddd" />
        <Band $h={92} $bg="#ececec" $side="right">管</Band>
        <Band $h={22} $bg="#ececec" />
        <Band $h={62} $bg="#00a1d9" />
        <Band $h={14} $bg="#fafafa" />
        <Band $h={50} $bg="#8bc132" />
        <Band $h={13} $bg="#f8f8f8" $line="#ccc" />
        <Band $h={41} $bg="#ececec" $line="#ccc" />
        <Band $h={44} $bg="#fafafa" $line="#bbb" />
        <Band $h={67} $bg="#fafafa" $line="#888" />
        <Band $h={39} $bg="#edf3f8" $line="#ccc" $side="right">高</Band>
        <Band $bg="#fafafa" $line="#ddd" />
        <Band $h={9} $bg="#ababab" />
      </Edge>
      <BottomEdge />
    </Desktop>
  );
}
